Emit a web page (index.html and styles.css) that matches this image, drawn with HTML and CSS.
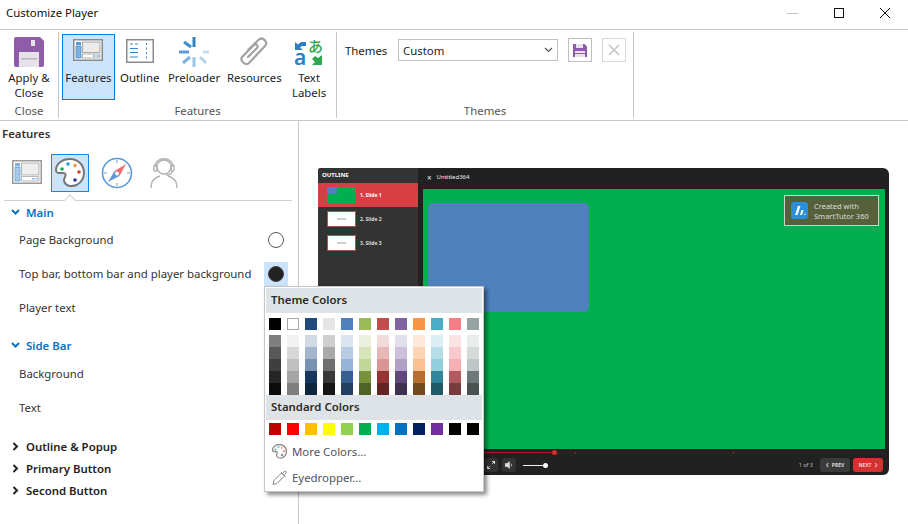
FILE: index.html
```html
<!DOCTYPE html>
<html lang="en">
<head>
<meta charset="UTF-8">
<title>Customize Player</title>
<link rel="stylesheet" href="styles.css">
</head>
<body>

<!-- TITLE BAR -->
<div class="titlebar">
 <span class="title">Customize Player</span>
 <div class="winbtns">
  <svg width="12" height="12" class="win-min"><path d="M0 6.500h11" stroke="#c4c4c4"/></svg>
  <svg width="12" height="12"><rect x="1.500" y="1.500" width="9" height="9" fill="none" stroke="#111"/></svg>
  <svg width="12" height="12"><path d="M1 1l10 10M11 1L1 11" stroke="#111"/></svg>
 </div>
</div>

<!-- RIBBON -->
<div class="ribbon">
 <div class="group group-close">
  <div class="group-items">
   <div class="rbtn">
    <svg width="30" height="30" viewBox="0 0 30 30"><path d="M0 2q0-2 2-2h24l4 4v24q0 2-2 2H2q-2 0-2-2z" fill="#8e5ca8"/><rect x="17" y="3" width="4" height="6" fill="#e9e2ee"/><rect x="5" y="15" width="20" height="15" fill="#e6e2e9"/><rect x="7" y="21" width="16" height="1.500" fill="#b9b3bd"/></svg>
    <span>Apply &amp;<br>Close</span>
   </div>
  </div>
  <div class="group-name">Close</div>
 </div>

 <div class="group group-features">
  <div class="group-items">
   <div class="rbtn active">
    <svg width="30" height="26" viewBox="0 0 30 26"><rect x=".75" y=".75" width="28.500" height="20.500" fill="#fff" stroke="#8b8b8b" stroke-width="1.500"/><rect x="3" y="3" width="5" height="3.500" fill="#5b9bd5"/><rect x="3" y="7.500" width="5" height="11.500" fill="#7fb2e0" stroke="#3f86c6" stroke-width=".7"/><rect x="9.500" y="3" width="17.500" height="10.500" fill="#ececec" stroke="#8b8b8b" stroke-width=".7"/><path d="M9.500 15h17.500v4H9.500z" fill="#fff" stroke="#8b8b8b" stroke-width=".7"/><path d="M20 17h2.500M23.500 17h2.500" stroke="#3f86c6"/></svg>
    <span>Features</span>
   </div>
   <div class="rbtn">
    <svg width="28" height="26" viewBox="0 0 28 26"><rect x=".75" y=".75" width="26.500" height="22.500" fill="#fff" stroke="#8b8b8b" stroke-width="1.500"/><path d="M4 5h3M9 5h3M4 9.500h8M4 13.500h8M4 18h8" stroke="#3f86c6"/><path d="M20.500 4v17" stroke="#3f86c6" stroke-dasharray="2 2.500"/></svg>
    <span>Outline</span>
   </div>
   <div class="rbtn">
    <svg width="30" height="30" viewBox="0 0 30 30" fill="none" stroke-width="3"><path d="M15 0v10" stroke="#2f80c2"/><path d="M5 5l7 5" stroke="#3f8fcf"/><path d="M0 15h10" stroke="#5b9bd5"/><path d="M4 26l7-6" stroke="#7fb2e0"/><path d="M15 20v10" stroke="#9cc4e6"/><path d="M21 20l6 6" stroke="#b4d2ec"/><path d="M24 15h6" stroke="#c4dcf0"/></svg>
    <span>Preloader</span>
   </div>
   <div class="rbtn">
    <svg width="28" height="30" viewBox="0 0 28 30" fill="none"><path d="M8 13L19 2.500c3.500-3 9.500 2.500 6 6.500L9 26c-3.500 3.500-10-2.500-6.500-6.500L14 8c2-2 5 1 3 3L8 20" stroke="#a3a3a3" stroke-width="2.200" stroke-linecap="round"/></svg>
    <span>Resources</span>
   </div>
   <div class="rbtn">
    <svg width="30" height="30" viewBox="0 0 30 30" class="labels-icon"><path d="M1 13V5l3 2.500L7 5h5v4H8L6 10.500 9 13z" fill="#2f80c2"/><text x="14" y="15" class="glyph-ja">あ</text><text x="0" y="28" class="glyph-a">a</text><path d="M28 18v10H18l3-3-3-3 3-3 3 2z" fill="#2fa84f"/></svg>
    <span>Text<br>Labels</span>
   </div>
  </div>
  <div class="group-name">Features</div>
 </div>

 <div class="group group-themes">
  <div class="group-items themes-row">
   <span class="themes-label">Themes</span>
   <div class="select">
    <span>Custom</span>
    <svg width="9" height="6"><path d="M1 1l3.500 3.500L8 1" fill="none" stroke="#555" stroke-width="1.200"/></svg>
   </div>
   <div class="sqbtn">
    <svg width="14" height="14" viewBox="0 0 14 14"><path d="M0 1h11.500L14 3.500V14H0z" fill="#8e5ca8"/><rect x="3" y="1" width="7" height="4" fill="#e9e2ee"/><rect x="2" y="8" width="10" height="6" fill="#e9e2ee"/><rect x="2" y="10" width="10" height="1" fill="#8e5ca8"/></svg>
   </div>
   <div class="sqbtn sqbtn-off">
    <svg width="12" height="12"><path d="M1 1l10 10M11 1L1 11" stroke="#c4c4c4" stroke-width="1.500"/></svg>
   </div>
  </div>
  <div class="group-name">Themes</div>
 </div>
</div>

<div class="main">

 <!-- LEFT PANEL -->
 <div class="panel">
  <div class="panel-title">Features</div>
  <div class="tabs">
   <div class="tab">
    <svg width="30" height="26" viewBox="0 0 30 26"><rect x=".75" y=".75" width="28.500" height="22.500" fill="#fff" stroke="#9a9a9a" stroke-width="1.500"/><rect x="3" y="3" width="5" height="3.500" fill="#7fb2e0"/><rect x="3" y="7.500" width="5" height="13.500" fill="#a6cbea" stroke="#5b9bd5" stroke-width=".7"/><rect x="9.500" y="3" width="17.500" height="12" fill="#eee" stroke="#9a9a9a" stroke-width=".7"/><path d="M9.500 16.500h17.500v4.500H9.500z" fill="#fff" stroke="#9a9a9a" stroke-width=".7"/><path d="M20 18.800h2.500M23.500 18.800h2.500" stroke="#5b9bd5"/></svg>
   </div>
   <div class="tab tab-on">
    <svg width="30" height="30" viewBox="0 0 30 30"><path d="M15 1C7 1 1 6 1 12c0 4 4 3 7 3 3 0 3 2 2 4-2 3-1 8 5 9 7 1 14-5 14-13C29 7 23 1 15 1z" fill="#fff" stroke="#777" stroke-width="2"/><circle cx="7" cy="11" r="1.800" fill="#14a651"/><circle cx="13" cy="6" r="1.800" fill="#1aa3e0"/><circle cx="20" cy="7.500" r="1.800" fill="#f79646"/><circle cx="24" cy="14" r="1.800" fill="#e8392e"/><circle cx="20" cy="22" r="1.800" fill="#27308f"/></svg>
   </div>
   <div class="tab">
    <svg width="32" height="32" viewBox="0 0 32 32" fill="none"><circle cx="16" cy="16" r="14.500" stroke="#5b9bd5" stroke-width="1.600"/><path d="M16 3v3M16 26v3M3 16h3M26 16h3" stroke="#9cc4e6" stroke-width="1.500"/><path d="M25 7l-6.500 12-5-5z" fill="#ef6f72"/><path d="M7 25l6.500-11 5 5z" fill="#5b9bd5"/><circle cx="16" cy="16.500" r="2" fill="#fff"/></svg>
   </div>
   <div class="tab">
    <svg width="28" height="31" viewBox="0 0 28 31" fill="none" stroke="#b2b2b2" stroke-width="1.400"><circle cx="14" cy="9" r="7"/><path d="M5 9c0-11 18-11 18 0"/><rect x="4" y="7" width="3" height="6" rx="1"/><rect x="21" y="7" width="3" height="6" rx="1"/><path d="M22 13c0 3-3 4-6 4"/><path d="M1 30c0-8 5-11 9-12M27 30c0-8-5-11-9-12"/></svg>
   </div>
  </div>
  <div class="tab-line"><i class="notch"></i></div>

  <div class="sec sec-main">
   <svg class="chev" width="9" height="7"><path d="M1 1l3.500 3.500L8 1" fill="none" stroke="#0a70c0" stroke-width="2"/></svg>
   <span>Main</span>
  </div>
  <div class="row"><span>Page Background</span><i class="dot dot-white"></i></div>
  <div class="row row-on"><span>Top bar, bottom bar and player background</span><b class="dot-wrap"><i class="dot dot-dark"></i></b></div>
  <div class="row"><span>Player text</span></div>

  <div class="sec sec-side">
   <svg class="chev" width="9" height="7"><path d="M1 1l3.500 3.500L8 1" fill="none" stroke="#0a70c0" stroke-width="2"/></svg>
   <span>Side Bar</span>
  </div>
  <div class="row"><span>Background</span></div>
  <div class="row"><span>Text</span></div>

  <div class="closed-list">
   <div class="closed"><svg width="7" height="9"><path d="M1.500 1L5 4.500 1.500 8" fill="none" stroke="#222" stroke-width="2"/></svg><span>Outline &amp; Popup</span></div>
   <div class="closed"><svg width="7" height="9"><path d="M1.500 1L5 4.500 1.500 8" fill="none" stroke="#222" stroke-width="2"/></svg><span>Primary Button</span></div>
   <div class="closed"><svg width="7" height="9"><path d="M1.500 1L5 4.500 1.500 8" fill="none" stroke="#222" stroke-width="2"/></svg><span>Second Button</span></div>
  </div>
 </div>

 <!-- PLAYER PREVIEW -->
 <div class="preview">
  <div class="player">
   <div class="player-top">
    <div class="side">
     <div class="side-head">OUTLINE</div>
     <div class="slide slide-on"><div class="thumb thumb-green"><i></i></div><span>1. Slide 1</span></div>
     <div class="slide"><div class="thumb"><u></u></div><span>2. Slide 2</span></div>
     <div class="slide"><div class="thumb"><u></u></div><span>3. Slide 3</span></div>
    </div>
    <div class="content">
     <div class="topbar"><span class="topbar-x">×</span><span>Untitled364</span></div>
     <div class="stage">
      <div class="shape"></div>
      <div class="badge">
       <svg width="17" height="17" viewBox="0 0 17 17"><rect width="17" height="17" rx="3" fill="#2a8fdc"/><path d="M7 4L4 13h2.500L9.500 4zM10.500 8L9 13h2l1.500-5zM14 11l-1 2h1.500z" fill="#fff"/></svg>
       <span>Created with<br>SmartTutor 360</span>
      </div>
     </div>
    </div>
   </div>
   <div class="bottombar">
    <div class="progress"><i class="progress-fill"></i><i class="progress-knob"></i></div>
    <div class="controls">
     <div class="ctl">
      <svg width="8" height="8"><path d="M8 0v3L5 0zM0 8V5l3 3zM7 1L5 3M1 7l2-2" stroke="#ddd" fill="#ddd" stroke-width=".7"/></svg>
     </div>
     <div class="ctl">
      <svg width="8" height="8"><path d="M0 2.500h2L4.500 .5v7L2 5.500H0zM6 2.500q1 1.500 0 3" fill="#ddd" stroke="#ddd" stroke-width=".5"/></svg>
     </div>
     <div class="volume"><i></i></div>
     <div class="count">1 of 3</div>
     <div class="nav nav-prev"><span class="nav-arrow">‹</span>PREV</div>
     <div class="nav nav-next">NEXT<span class="nav-arrow">›</span></div>
    </div>
   </div>
  </div>
 </div>
</div>

<!-- COLOR POPUP -->
<div class="popup">
 <div class="pop-head">Theme Colors</div>
 <div class="swatches top-row">
  <i style="background:#000"></i><i class="sw-white" style="background:#fff"></i><i style="background:#1f497d"></i><i style="background:#e5e5e5"></i><i style="background:#4f81bd"></i><i style="background:#9bbb59"></i><i style="background:#c0504d"></i><i style="background:#8064a2"></i><i style="background:#f79646"></i><i style="background:#4bacc6"></i><i style="background:#f57f85"></i><i style="background:#95a3a3"></i>
 </div>
 <div class="swatches shades">
  <i style="background:#7f7f7f"></i><i style="background:#f2f2f2"></i><i style="background:#d2dae5"></i><i style="background:#cfcfcf"></i><i style="background:#dce6f1"></i><i style="background:#ebf1de"></i><i style="background:#f2dcdb"></i><i style="background:#e4dfec"></i><i style="background:#fde9d9"></i><i style="background:#daeef3"></i><i style="background:#fce4e5"></i><i style="background:#eaeded"></i>
  <i style="background:#595959"></i><i style="background:#d8d8d8"></i><i style="background:#a5b6cc"></i><i style="background:#a9a9a9"></i><i style="background:#b8cce4"></i><i style="background:#d8e4bc"></i><i style="background:#e6b8b7"></i><i style="background:#ccc0da"></i><i style="background:#fcd5b4"></i><i style="background:#b7dee8"></i><i style="background:#f9cacd"></i><i style="background:#d5dada"></i>
  <i style="background:#3f3f3f"></i><i style="background:#bfbfbf"></i><i style="background:#7891b1"></i><i style="background:#6f6f6f"></i><i style="background:#95b3d7"></i><i style="background:#c4d79b"></i><i style="background:#da9694"></i><i style="background:#b1a0c7"></i><i style="background:#fac090"></i><i style="background:#92cddc"></i><i style="background:#f5b0b3"></i><i style="background:#bec7c7"></i>
  <i style="background:#262626"></i><i style="background:#a5a5a5"></i><i style="background:#17365d"></i><i style="background:#393939"></i><i style="background:#366092"></i><i style="background:#76933c"></i><i style="background:#963634"></i><i style="background:#60497a"></i><i style="background:#b86e30"></i><i style="background:#31869b"></i><i style="background:#b25a5e"></i><i style="background:#6e7979"></i>
  <i style="background:#0c0c0c"></i><i style="background:#7f7f7f"></i><i style="background:#0f243e"></i><i style="background:#171717"></i><i style="background:#244061"></i><i style="background:#4f6228"></i><i style="background:#632523"></i><i style="background:#403151"></i><i style="background:#744a1f"></i><i style="background:#215967"></i><i style="background:#763c3f"></i><i style="background:#495151"></i>
 </div>
 <div class="pop-head">Standard Colors</div>
 <div class="swatches std-row">
  <i style="background:#c00000"></i><i style="background:#f00"></i><i style="background:#ffc000"></i><i style="background:#ff0"></i><i style="background:#92d050"></i><i style="background:#00b050"></i><i style="background:#00b0f0"></i><i style="background:#0070c0"></i><i style="background:#002060"></i><i style="background:#7030a0"></i><i style="background:#000"></i><i style="background:#000"></i>
 </div>
 <div class="pop-item">
  <svg width="15" height="15" viewBox="0 0 30 30"><path d="M15 1C7 1 1 6 1 12c0 4 4 3 7 3 3 0 3 2 2 4-2 3-1 8 5 9 7 1 14-5 14-13C29 7 23 1 15 1z" fill="#fff" stroke="#888" stroke-width="2.500"/><circle cx="7" cy="11" r="2.400" fill="#8fcfa8"/><circle cx="13" cy="6" r="2.400" fill="#8ccfee"/><circle cx="20" cy="7.500" r="2.400" fill="#f7c08f"/><circle cx="24" cy="14" r="2.400" fill="#ef9a94"/><circle cx="20" cy="22" r="2.400" fill="#8186c4"/></svg>
  <span>More Colors...</span>
 </div>
 <div class="pop-item">
  <svg width="15" height="15" viewBox="0 0 15 15" fill="none" stroke="#8a8a8a"><path d="M9.500 3l3 3-7.500 7.500-4 1 1-4z"/><path d="M9 2l4.500 4.500M11 3q1.500-3 3-1.500t-1.500 3"/></svg>
  <span>Eyedropper...</span>
 </div>
</div>

</body>
</html>
```

FILE: styles.css
```css
*{box-sizing:border-box;}

body{
 margin:0;
 width:908px;
 height:524px;
 position:relative;
 overflow:hidden;
 background:white;
 color:#222;
 font-family:"Noto Sans",Arial,sans-serif;
 font-size:11.400px;
}

/* TITLE BAR */
.titlebar{
 height:30px;
 display:flex;
 align-items:center;
 justify-content:space-between;
 padding:0 17px 4px 6px;
 border-bottom:1px solid #c8c8c8;
}
.title{color:#111;}
.winbtns{display:flex;gap:34px;}
.winbtns svg{display:block;}

/* RIBBON */
.ribbon{
 height:91px;
 display:flex;
 padding-top:2px;
 border-bottom:1px solid #c8c8c8;
}
.group{
 height:86px;
 display:flex;
 flex-direction:column;
 border-right:1px solid #c8c8c8;
 text-align:center;
}
.group-close{width:59px;}
.group-features{width:278px;}
.group-themes{width:297px;}
.group-items{flex:1;display:flex;padding:2px 3px 0;}
.group-name{color:#555;height:14px;line-height:13px;}

.rbtn{
 height:66px;
 padding-top:2px;
 display:flex;
 flex-direction:column;
 align-items:center;
 line-height:15px;
 border:1px solid transparent;
}
.rbtn svg{height:30px;margin-bottom:3px;flex:none;}
.group-close .rbtn{width:53px;}
.group-features .rbtn{width:53px;}
.group-features .rbtn:nth-child(2){width:50px;}
.group-features .rbtn:nth-child(3){width:59px;}
.group-features .rbtn:nth-child(4){width:62px;}
.group-features .rbtn:nth-child(5){width:48px;}
.rbtn.active{background:#cce4fb;border-color:#0a78d7;}
.labels-icon{overflow:visible;}

.themes-row{align-items:flex-start;padding:5px 0 0 8px;}
.themes-label{margin-top:6px;width:53px;text-align:left;}
.select{
 width:160px;
 height:22px;
 margin-top:2px;
 padding:0 4px;
 display:flex;
 align-items:center;
 justify-content:space-between;
 border:1px solid #c0c0c0;
}
.sqbtn{
 width:24px;
 height:24px;
 margin-top:1px;
 margin-left:10px;
 border:1px solid #c0c0c0;
 display:flex;
 align-items:center;
 justify-content:center;
}
.sqbtn-off{border-color:#d8d8d8;}

.main{display:flex;height:403px;}

/* LEFT PANEL */
.panel{
 width:299px;
 flex:none;
 border-right:1px solid #c8c8c8;
}
.panel-title{
 padding:5px 0 0 2px;
 height:33px;
 font-weight:600;
 color:#333;
}
.tabs{display:flex;align-items:center;height:38px;padding-left:8px;}
.tab{width:38px;height:38px;margin-right:9px;display:flex;align-items:center;justify-content:center;border:1px solid transparent;}
.tab:first-child{margin-right:5px;}
.tab-on{background:#cce4fb;border-color:#1b86dc;}
.tab-line{
 position:relative;
 height:1px;
 margin:8px 6px 0 4px;
 background:#d0d0d0;
}
.notch{
 position:absolute;
 left:62px;
 top:-4px;
 width:8px;
 height:8px;
 background:white;
 border-left:1px solid #d0d0d0;
 border-top:1px solid #d0d0d0;
 transform:rotate(45deg);
}

.sec{
 display:flex;
 align-items:center;
 gap:6px;
 padding-left:11px;
 height:20px;
 color:#0a70c0;
 font-weight:600;
}
.sec span,.sec .chev,.row>span{margin-top:-2px;}
.sec-main{margin-top:2px;}
.sec-side{margin:11px 0 1px;}
.row{
 height:34px;
 padding-left:19px;
 padding-right:10px;
 display:flex;
 align-items:center;
 justify-content:space-between;
 color:#333;
}
.dot{display:block;width:16px;height:16px;border-radius:50%;}
.dot-white{border:1px solid #555;margin-right:4px;}
.dot-dark{background:#222;border:1px solid #444;}
.dot-wrap{
 width:24px;
 height:25px;
 display:flex;
 align-items:center;
 justify-content:center;
 background:#cce4fb;
}
.closed-list{margin-top:10px;}
.closed{
 height:22px;
 padding-left:12px;
 display:flex;
 align-items:center;
 gap:7px;
 font-weight:600;
 color:#222;
}

/* PREVIEW */
.preview{flex:1;display:flex;align-items:center;justify-content:center;padding-bottom:2px;}
.player{
 width:571px;
 height:307px;
 background:#212121;
 border-radius:3px 6px 6px 3px;
 display:flex;
 flex-direction:column;
 color:#ddd;
 overflow:hidden;
}
.player-top{flex:1;display:flex;}
.side{width:100px;background:#333;flex:none;}
.side-head{
 height:15px;
 padding-left:4px;
 font-size:6px;
 font-weight:700;
 line-height:15px;
 color:#fff;
}
.slide{
 height:24px;
 padding-left:9px;
 display:flex;
 align-items:center;
 gap:4px;
 font-size:5px;
 font-weight:700;
 color:#ddd;
}
.slide-on{background:#d64045;color:#fff;}
.thumb{
 width:29px;
 height:16px;
 background:#fff;
 border:1px solid #a05a5a;
 display:flex;
 align-items:center;
 justify-content:center;
}
.thumb u{display:block;width:9px;height:2px;background:#ccc;}
.thumb-green{background:#00b050;border:none;align-items:flex-start;justify-content:flex-start;}
.thumb-green i{display:block;width:10px;height:7px;background:#4f81bd;}
.content{flex:1;display:flex;flex-direction:column;}
.topbar{
 height:21px;
 padding:0 0 3px 9px;
 display:flex;
 align-items:center;
 gap:5px;
 font-size:6px;
 color:#eee;
}
.topbar-x{font-size:8px;}
.stage{
 flex:1;
 margin:0 4px 0 5px;
 padding:14px 5px;
 background:#00b050;
 position:relative;
}
.shape{width:161px;height:109px;background:#4f81bd;border-radius:5px;}
.badge{
 position:absolute;
 top:6px;
 right:6px;
 width:95px;
 height:31px;
 padding-left:6px;
 display:flex;
 align-items:center;
 gap:6px;
 background:#56603a;
 border:1px solid #d0d4c8;
 font-size:7.500px;
 line-height:10px;
 color:#ddd;
}
.bottombar{height:26px;flex:none;}
.progress{
 position:relative;
 height:2px;
 margin:3px 4px 0 0;
 background:linear-gradient(90deg,transparent 257px,#a02222 257px,#a02222 258px,transparent 258px,transparent 415px,#a02222 415px,#a02222 416px,transparent 416px),#2a2222;
}
.progress-fill{display:block;height:1px;width:237px;background:#a02222;}
.progress-knob{
 position:absolute;
 left:234px;
 top:-2px;
 width:5px;
 height:5px;
 border-radius:50%;
 background:#d32f2f;
}
.controls{height:21px;display:flex;align-items:center;padding:1px 6px 0 166px;}
.ctl{
 width:14px;
 height:14px;
 margin-right:4px;
 background:#333;
 border-radius:3px;
 display:flex;
 align-items:center;
 justify-content:center;
}
.volume{position:relative;width:23px;height:1px;margin-left:3px;background:#eee;}
.volume i{
 position:absolute;
 right:-2px;
 top:-2px;
 width:5px;
 height:5px;
 border-radius:50%;
 background:#fff;
}
.count{margin-left:auto;margin-right:7px;font-size:5.500px;color:#bbb;}
.nav{
 width:30px;
 height:14px;
 margin-left:3px;
 border-radius:3px;
 display:flex;
 align-items:center;
 justify-content:center;
 gap:3px;
 font-size:5px;
 font-weight:700;
 color:#ddd;
}
.nav-arrow{font-size:10px;font-weight:400;line-height:10px;margin-top:-2px;}
.nav-prev{background:#3a3a3a;margin-left:0;}
.nav-next{background:#d63031;color:#f4d0d0;}

/* COLOR POPUP */
.popup{
 position:absolute;
 left:264px;
 top:286px;
 width:220px;
 height:206px;
 padding:1px;
 background:white;
 border:1px solid #c6c6c6;
 box-shadow:3px 3px 4px rgba(0,0,0,.45);
}
.pop-head{
 height:25px;
 padding-left:5px;
 line-height:24px;
 background:#dee3e7;
 font-weight:600;
 color:#2a2a2a;
}
.swatches{
 display:grid;
 grid-template-columns:repeat(12,12px);
 column-gap:6px;
 padding-left:3px;
}
.swatches i{display:block;height:12px;}
.top-row{padding-top:5px;}
.sw-white{border:1px solid #a8a8a8;}
.shades{padding-top:5px;}
.std-row{padding-top:3px;}
.pop-item{
 height:26px;
 padding-left:6px;
 display:flex;
 align-items:center;
 gap:5px;
 color:#4a5560;
}
.std-row + .pop-item{margin-top:3px;}
.glyph-ja{font-family:"Noto Sans CJK JP",sans-serif;font-size:15px;font-weight:500;fill:#2fa84f;}
.glyph-a{font-family:"Noto Sans",sans-serif;font-size:21px;font-weight:600;fill:#2f80c2;}
```
